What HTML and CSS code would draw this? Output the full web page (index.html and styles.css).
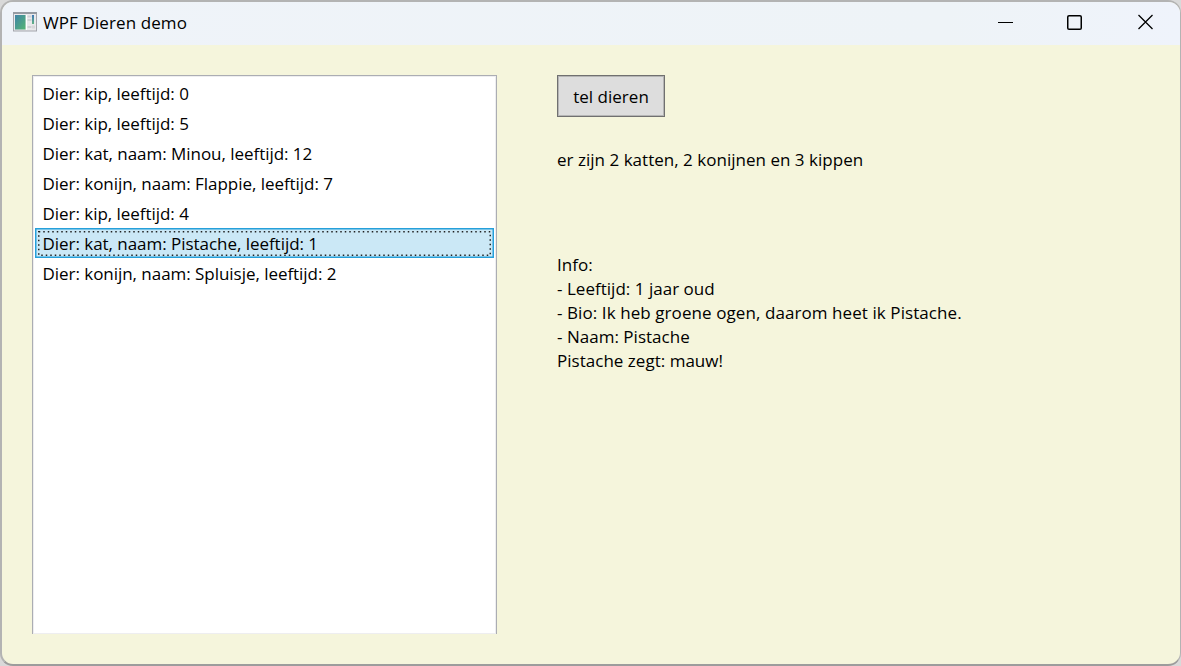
FILE: index.html
```html
<!DOCTYPE html>
<html lang="nl">
<head>
<meta charset="utf-8">
<title>WPF Dieren demo</title>
<link rel="stylesheet" href="styles.css">
</head>
<body>
<div class="window">
  <header class="titlebar">
    <svg class="app-icon" width="24" height="20" viewBox="0 0 24 20">
      <defs>
        <linearGradient id="screen" x1="0" y1="0" x2="1" y2="1">
          <stop offset="0" stop-color="#3f83a8"/><stop offset="1" stop-color="#55b673"/>
        </linearGradient>
        <linearGradient id="bar" x1="0" y1="0" x2="0" y2="1">
          <stop offset="0" stop-color="#4078b8"/><stop offset="1" stop-color="#62b383"/>
        </linearGradient>
      </defs>
      <rect x=".5" y=".5" width="23" height="18.5" fill="#e9e9ec" stroke="#a3a5ac"/>
      <path d="M0 1h24" stroke="#969ba3" stroke-width="2"/>
      <rect x="2" y="3" width="10.5" height="14.5" fill="url(#screen)"/>
      <path d="M13.5 3v15" stroke="#fff"/>
      <path d="M14.5 4.5h4M14.5 8h4M14.5 15h4" stroke="#cfd1d5" stroke-width="2"/>
      <rect x="19" y="3" width="2" height="9" fill="url(#bar)"/>
      <path d="M19 15h3" stroke="#d7d7da" stroke-width="3"/>
    </svg>
    <span class="title">WPF Dieren demo</span>
    <div class="controls">
      <svg width="15" height="16" viewBox="0 0 15 16"><path d="M0 8.5h15" stroke="#000"/></svg>
      <svg class="maximize" width="15" height="16" viewBox="0 0 15 16"><rect x=".75" y="1.75" width="13.5" height="13.5" rx="1.3" fill="none" stroke="#000" stroke-width="1.5"/></svg>
      <svg width="15" height="16" viewBox="0 0 15 16"><path d="M.5 1l14 14M14.5 1l-14 14" stroke="#000" stroke-width="1.3"/></svg>
    </div>
  </header>
  <main class="content">
    <ul class="list">
      <li>Dier: kip, leeftijd: 0</li>
      <li>Dier: kip, leeftijd: 5</li>
      <li>Dier: kat, naam: Minou, leeftijd: 12</li>
      <li>Dier: konijn, naam: Flappie, leeftijd: 7</li>
      <li>Dier: kip, leeftijd: 4</li>
      <li class="selected">Dier: kat, naam: Pistache, leeftijd: 1<svg class="focus" width="453" height="25"><rect x=".75" y=".75" width="451.5" height="23.5"/></svg></li>
      <li>Dier: konijn, naam: Spluisje, leeftijd: 2</li>
    </ul>
    <section class="details">
      <button class="count">tel dieren</button>
      <p class="summary">er zijn 2 katten, 2 konijnen en 3 kippen</p>
      <div class="info">
        <p>Info:</p>
        <p>- Leeftijd: 1 jaar oud</p>
        <p class="bio">- Bio: Ik heb groene ogen, daarom heet ik Pistache.</p>
        <p>- Naam: Pistache</p>
        <p>Pistache zegt: mauw!</p>
      </div>
    </section>
  </main>
</div>
</body>
</html>
```
FILE: styles.css
```css
* { box-sizing: border-box; }
body {
  margin: 0;
  width: 1181px;
  height: 666px;
  overflow: hidden;
  background: #d9d9d9;
  font: 17px/24px "Open Sans", "Noto Sans", sans-serif;
  letter-spacing: 0.02px;
  color: #000;
}
p, ul { margin: 0; padding: 0; }
.window {
  height: 666px;
  border: 2px solid #b3b3b3;
  border-right-width: 1px;
  border-bottom-color: #9c9c9c;
  border-radius: 13px;
  background: #f5f5dc;
  overflow: hidden;
}
.titlebar {
  display: flex;
  align-items: center;
  height: 43px;
  padding: 0 27px 3px 11px;
  background: linear-gradient(90deg, #eff3f9, #eef3f7 80%, #eff3fb);
}
.title { margin-left: 6px; padding-top: 2px; letter-spacing: 0.1px; }
.controls { display: flex; margin-left: auto; }
.maximize { margin: 0 56px 0 54px; }
.content { display: flex; padding: 30px 0 0 30px; }
.list {
  width: 465px;
  height: 559px;
  padding: 2px;
  border: 1px solid #abadb3;
  border-bottom: 0;
  background: #fff;
  box-shadow: inset 0 0 0 1px #eeeef0;
  clip-path: inset(0);
  list-style: none;
  letter-spacing: -0.04px;
}
.list li {
  height: 30px;
  padding: 3px 7px 1px 6.5px;
  border: 1px solid transparent;
  white-space: nowrap;
}
.list .selected {
  position: relative;
  border-color: #26a0da;
  background: #cbe8f6;
  box-shadow: inset 0 0 0 0.5px #26a0da;
}
.focus { position: absolute; left: 2px; top: 2px; }
.focus rect { fill: none; stroke: #222; stroke-width: 1.5; stroke-dasharray: 1.5 3; }
.details { margin-left: 60px; }
.count {
  display: block;
  width: 108px;
  height: 42px;
  padding: 2px 0 0;
  border: 1px solid #707070;
  background: #ddd;
  box-shadow: inset 0 0 0 1px #b5b5b5;
  font: inherit;
  letter-spacing: inherit;
  color: #000;
}
.summary { margin-top: 31px; }
.info { margin-top: 81px; }
.bio { letter-spacing: 0.08px; }
```
